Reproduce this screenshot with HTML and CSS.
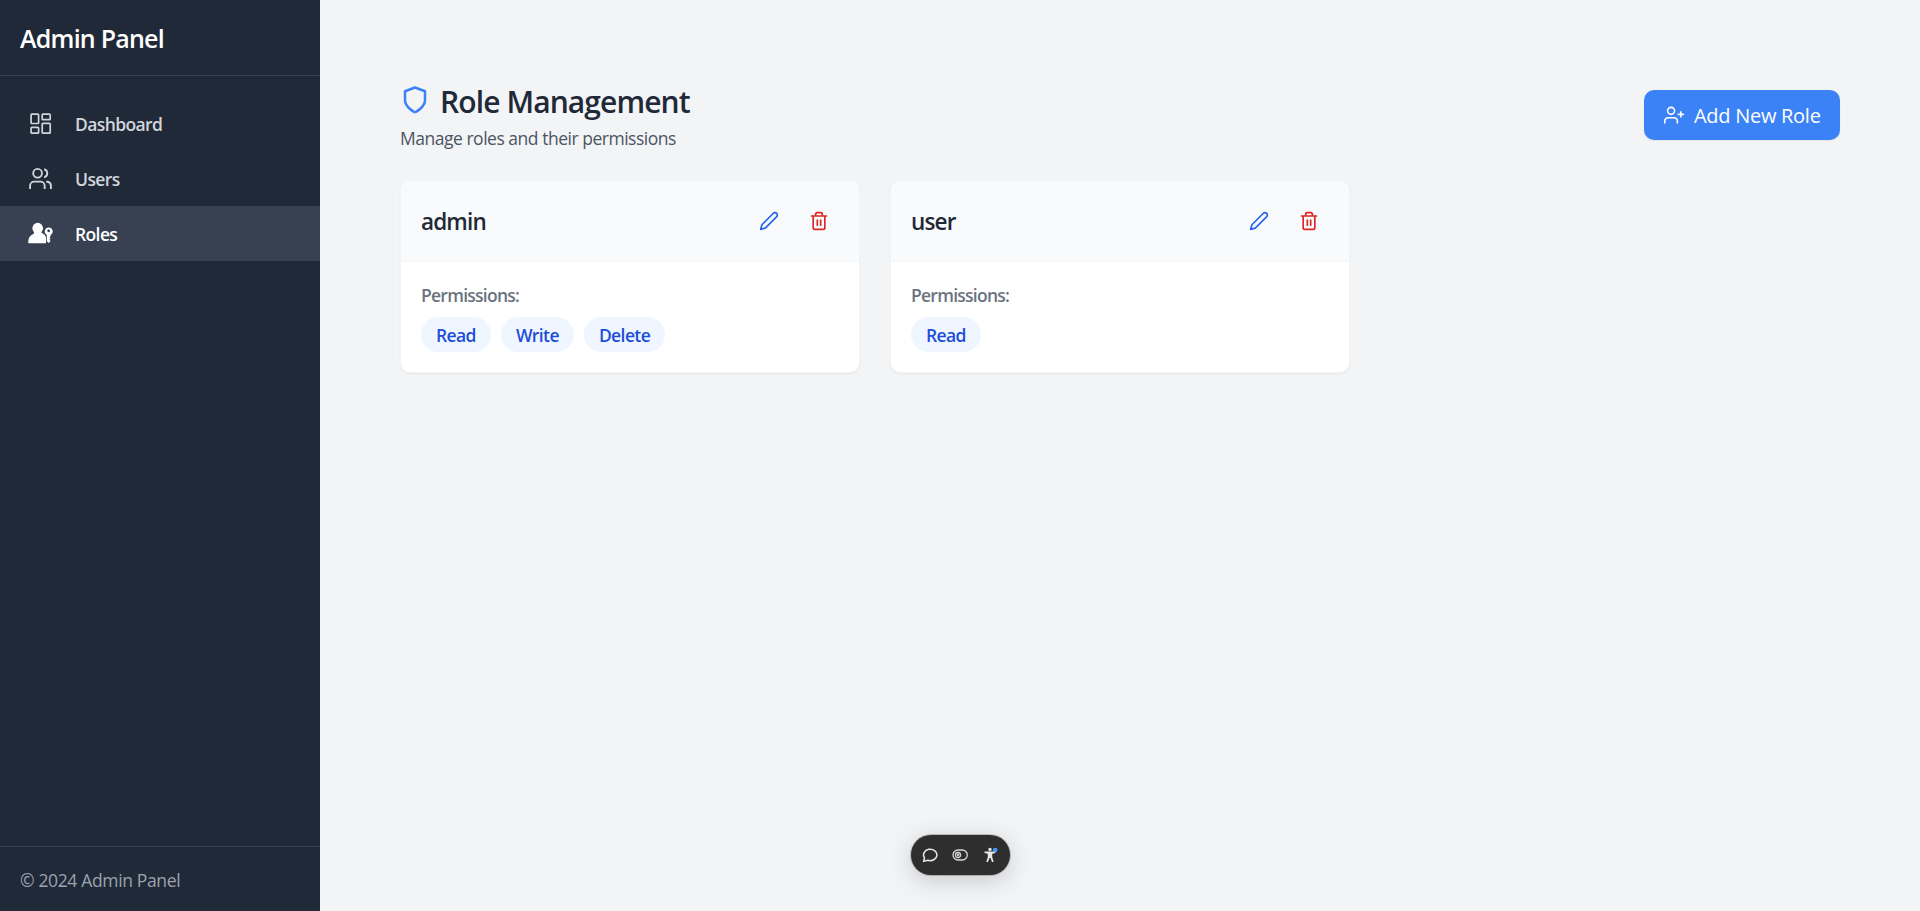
FILE: index.html
```html
<!DOCTYPE html>
<html lang="en">
<head>
<meta charset="utf-8">
<title>Admin Panel</title>
<link rel="stylesheet" href="styles.css">
</head>
<body>
<svg class="defs" aria-hidden="true">
  <symbol id="pencil" viewBox="0 0 24 24"><path d="M17 3a2.85 2.83 0 1 1 4 4L7.5 20.500 2 22l1.500-5.500Z"/></symbol>
  <symbol id="trash" viewBox="0 0 24 24"><path d="M3 6h18M19 6v14a2 2 0 0 1-2 2H7a2 2 0 0 1-2-2V6M8 6V4a2 2 0 0 1 2-2h4a2 2 0 0 1 2 2v2M10 11v6M14 11v6"/></symbol>
</svg>
<div class="layout">
  <aside class="sidebar">
    <div class="brand">Admin Panel</div>
    <nav class="nav">
      <a class="nav-item"><svg class="nav-icon" viewBox="0 0 25 25" fill="none" stroke="currentColor" stroke-width="1.7"><rect x="3.100" y="3.100" width="7.500" height="9.400" rx=".8"/><rect x="14.200" y="3.100" width="8" height="5.600" rx=".8"/><rect x="14.200" y="12.300" width="8" height="9.900" rx=".8"/><rect x="3.100" y="16.400" width="7.500" height="5.800" rx=".8"/></svg><span class="nav-text">Dashboard</span></a>
      <a class="nav-item"><svg class="nav-icon" viewBox="0 0 24 24" fill="none" stroke="currentColor" stroke-width="1.8"><path d="M16 22v-3a4 4 0 0 0-4-4H6a4 4 0 0 0-4 4v3M22 22v-3a4 4 0 0 0-3-3.870h-1.500M15.500 3.130a4 4 0 0 1 0 7.750"/><circle cx="9.200" cy="7" r="4.200"/></svg><span class="nav-text">Users</span></a>
      <a class="nav-item active"><svg class="nav-icon" viewBox="0 0 25 25" fill="currentColor"><ellipse cx="9.700" cy="7.300" rx="5.300" ry="5.500"/><path d="M7 11h5.500l4.200 2.800c.5 1.200 1.300 2 1.300 3.200v5.200H.3c0-4 .7-7.200 4.700-8.900Z"/><path fill-rule="evenodd" d="M20.700 6.500a4 4 0 0 1 1.900 7.500v1.300l-1.200 1 1.200 1.200-1.200 1.200 1.200 1.200-1.900 2.200-1.900-1.900V14a4 4 0 0 1 1.900-7.500Zm0 1.900a1.400 1.400 0 1 0 0 2.800 1.400 1.400 0 0 0 0-2.800Z"/></svg><span class="nav-text">Roles</span></a>
    </nav>
    <footer class="copyright">© 2024 Admin Panel</footer>
  </aside>
  <main class="main">
    <header class="page-head">
      <div>
        <h1 class="title"><svg class="shield" viewBox="0 0 24 24" fill="none" stroke="currentColor" stroke-width="2" stroke-linejoin="round"><path d="M12 22s8-4 8-10V5l-8-3-8 3v7c0 6 8 10 8 10"/></svg><span>Role Management</span></h1>
        <p class="subtitle">Manage roles and their permissions</p>
      </div>
      <button class="add"><svg class="add-icon" viewBox="0 0 24 24" fill="none" stroke="currentColor" stroke-width="1.9"><path d="M16 22.200v-3a4 4 0 0 0-4-4H5a4 4 0 0 0-4 4v3M20.200 7.500v7.500M23.900 11.200h-7.400"/><circle cx="8.500" cy="7" r="4.200"/></svg><span>Add New Role</span></button>
    </header>
    <section class="cards">
      <article class="card">
        <header class="card-head"><h2 class="role">admin</h2><div class="actions"><button class="act edit"><svg class="ic"><use href="#pencil"/></svg></button><button class="act del"><svg class="ic"><use href="#trash"/></svg></button></div></header>
        <div class="card-body"><p class="label">Permissions:</p>
        <div class="chips"><span class="chip">Read</span><span class="chip">Write</span><span class="chip">Delete</span></div></div>
      </article>
      <article class="card">
        <header class="card-head"><h2 class="role">user</h2><div class="actions"><button class="act edit"><svg class="ic"><use href="#pencil"/></svg></button><button class="act del"><svg class="ic"><use href="#trash"/></svg></button></div></header>
        <div class="card-body"><p class="label">Permissions:</p>
        <div class="chips"><span class="chip">Read</span></div></div>
      </article>
    </section>
  </main>
</div>
<div class="toolbar">
  <svg class="tool" viewBox="0 0 16 16" fill="none" stroke="#e8e8e8" stroke-width="1.500" stroke-linejoin="round"><path d="M1.600 14.400 2.500 10.800A6.700 5.700 0 1 1 5.800 13.200Z"/></svg>
  <svg class="tool" viewBox="0 0 16 16" fill="none" stroke="#d8d8d8" stroke-width="1.300"><rect x="1" y="3" width="14.300" height="10" rx="5"/><circle cx="6" cy="8" r="2.500"/><circle cx="6" cy="8" r=".5"/></svg>
  <svg class="tool" viewBox="0 0 16 16"><path fill="#e8e8e8" d="M8 .7a1.700 1.700 0 1 1 0 3.400A1.700 1.700 0 0 1 8 .7ZM2.500 4.500h11V6L10.200 6.800V10l1.500 5H10L8.500 11h-1L6 15H4.300l1.500-5V6.800L2.500 6Z"/><circle cx="13.200" cy="3" r="2.300" fill="#3b9bff"/></svg>
</div>
</body>
</html>
```
FILE: styles.css
```css
* { box-sizing: border-box; }
body { margin: 0; font-family: "Open Sans", "Noto Sans", sans-serif; font-size: 17.5px; line-height: 25px; background: #f3f4f6; }
h1, h2, p { margin: 0; }
button { border: 0; padding: 0; background: none; font-family: inherit; }
.defs { position: absolute; width: 0; height: 0; }
.layout { display: flex; height: 911px; }
.sidebar { width: 320px; display: flex; flex-direction: column; background: #1f2937; color: #fff; }
.brand { height: 76px; padding: 19px 20px; border-bottom: 1px solid #374151; font-size: 25px; line-height: 38px; font-weight: 600; letter-spacing: -.77px; }
.nav { flex: 1; padding-top: 20px; }
.nav-item { display: flex; align-items: center; gap: 22px; height: 55px; padding: 0 28px; color: #d1d5db; font-weight: 600; letter-spacing: -.62px; }
.nav-item.active { background: #374151; color: #fff; }
.nav-icon { width: 25px; height: 25px; }
.nav-text { padding-top: 2px; }
.copyright { height: 65px; border-top: 1px solid #374151; padding: 21px 20px; color: #9ca3af; letter-spacing: -.35px; }
.main { flex: 1; padding: 80px; }
.page-head { display: flex; justify-content: space-between; height: 100px; }
.title { display: flex; gap: 10px; font-size: 30px; line-height: 43px; font-weight: 600; letter-spacing: -.9px; color: #1f2937; }
.shield { width: 30px; height: 30px; margin-top: 5px; color: #3b82f6; }
.subtitle { margin-top: 3px; color: #4b5563; letter-spacing: -.48px; }
.add { display: flex; align-items: center; gap: 10px; width: 196px; height: 50px; padding: 0 20px; margin-top: 10px; border-radius: 10px; background: #3b82f6; color: #fff; font-size: 20px; line-height: 27px; letter-spacing: -.28px; white-space: nowrap; box-shadow: 0 1px 2px rgba(0, 0, 0, .06); }
.add-icon { flex: none; width: 20px; height: 20px; }
.cards { display: grid; grid-template-columns: repeat(3, 1fr); gap: 30px; }
.card { background: #fff; border: 1px solid #f3f4f6; border-radius: 10px; box-shadow: 0 1px 2px rgba(0, 0, 0, .06); overflow: hidden; }
.card-head { display: flex; justify-content: space-between; align-items: center; height: 81px; padding: 0 20px; background: #f9fafb; border-bottom: 1px solid #f3f4f6; }
.role { font-size: 22.5px; font-weight: 600; letter-spacing: -.85px; color: #1f2937; }
.actions { display: flex; gap: 10px; }
.act { width: 40px; height: 40px; padding: 10px; }
.edit { color: #2563eb; }
.del { color: #dc2626; }
.ic { display: block; width: 20px; height: 20px; fill: none; stroke: currentColor; stroke-width: 2; stroke-linejoin: round; stroke-linecap: round; }
.card-body { padding: 21px 20px 20px; }
.label { margin-bottom: 9px; font-weight: 600; letter-spacing: -.74px; color: #6b7280; }
.chips { display: flex; gap: 10px; }
.chip { padding: 6px 15px 4px; font-weight: 600; letter-spacing: -.6px; background: #eff6ff; color: #1d4ed8; border-radius: 18px; }
.toolbar { position: fixed; left: 910.5px; top: 835px; display: flex; align-items: center; justify-content: center; gap: 14px; width: 99.5px; height: 40px; border-radius: 20px; background: #2e2e2e; box-shadow: 0 0 0 1px rgba(0, 0, 0, .2), 0 5px 25px rgba(0, 0, 0, .18); }
.tool { width: 16px; height: 16px; }
```
